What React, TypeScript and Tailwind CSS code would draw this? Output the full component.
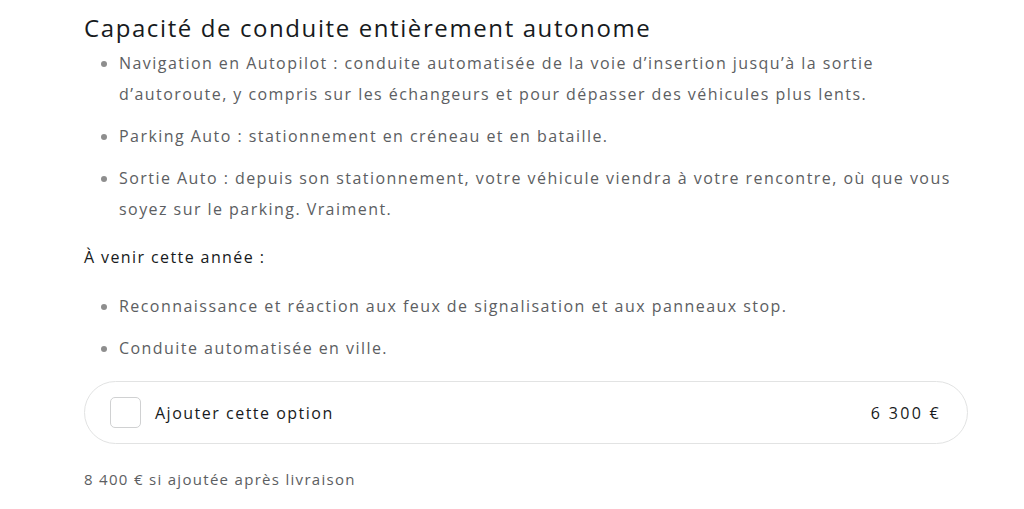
import React from 'react';

const features = [
  "Navigation en Autopilot : conduite automatisée de la voie d’insertion jusqu’à la sortie d’autoroute, y compris sur les échangeurs et pour dépasser des véhicules plus lents.",
  "Parking Auto : stationnement en créneau et en bataille.",
  "Sortie Auto : depuis son stationnement, votre véhicule viendra à votre rencontre, où que vous soyez sur le parking. Vraiment.",
];

const upcoming = [
  "Reconnaissance et réaction aux feux de signalisation et aux panneaux stop.",
  "Conduite automatisée en ville.",
];

function Bullets({ items }: { items: string[] }) {
  return (
    <ul className="list-disc pl-[35px] marker:text-[#8e8e8e] space-y-[11px]">
      {items.map((item, i) => (
        <li key={i} className="text-[16px] leading-[31px] tracking-[1.45px] text-[#5c5e62]">
          {item}
        </li>
      ))}
    </ul>
  );
}

export default function App() {
  return (
    <div className="min-h-[509px] bg-white font-['Open_Sans',sans-serif] text-[#171a20]">
      <div className="w-[884px] ml-[84px] pt-[12px]">
        <h2 className="text-[24px] leading-[32px] tracking-[1.6px] text-[#171a20]">Capacité de conduite entièrement autonome</h2>
        <div className="mt-[4px]">
          <Bullets items={features} />
        </div>
        <p className="mt-[17px] text-[16px] leading-[31px] tracking-[1.4px] text-[#171a20]">À venir cette année :</p>
        <div className="mt-[18px]">
          <Bullets items={upcoming} />
        </div>
        <div className="mt-[17px] h-[63px] rounded-full border-[1.5px] border-[#e2e3e3] flex items-center pl-[25px] pr-[26px]">
          <div className="size-[31px] rounded-[5px] border-[1.5px] border-[#d0d1d2]" />
          <span className="ml-[14px] text-[16px] tracking-[1.5px] text-[#171a20]">Ajouter cette option</span>
          <span className="ml-auto text-[16px] tracking-[2.3px] text-[#171a20]">6 300 €</span>
        </div>
        <p className="mt-[24px] text-[15px] tracking-[1.3px] text-[#5c5e62]">8 400 € si ajoutée après livraison</p>
      </div>
    </div>
  );
}
